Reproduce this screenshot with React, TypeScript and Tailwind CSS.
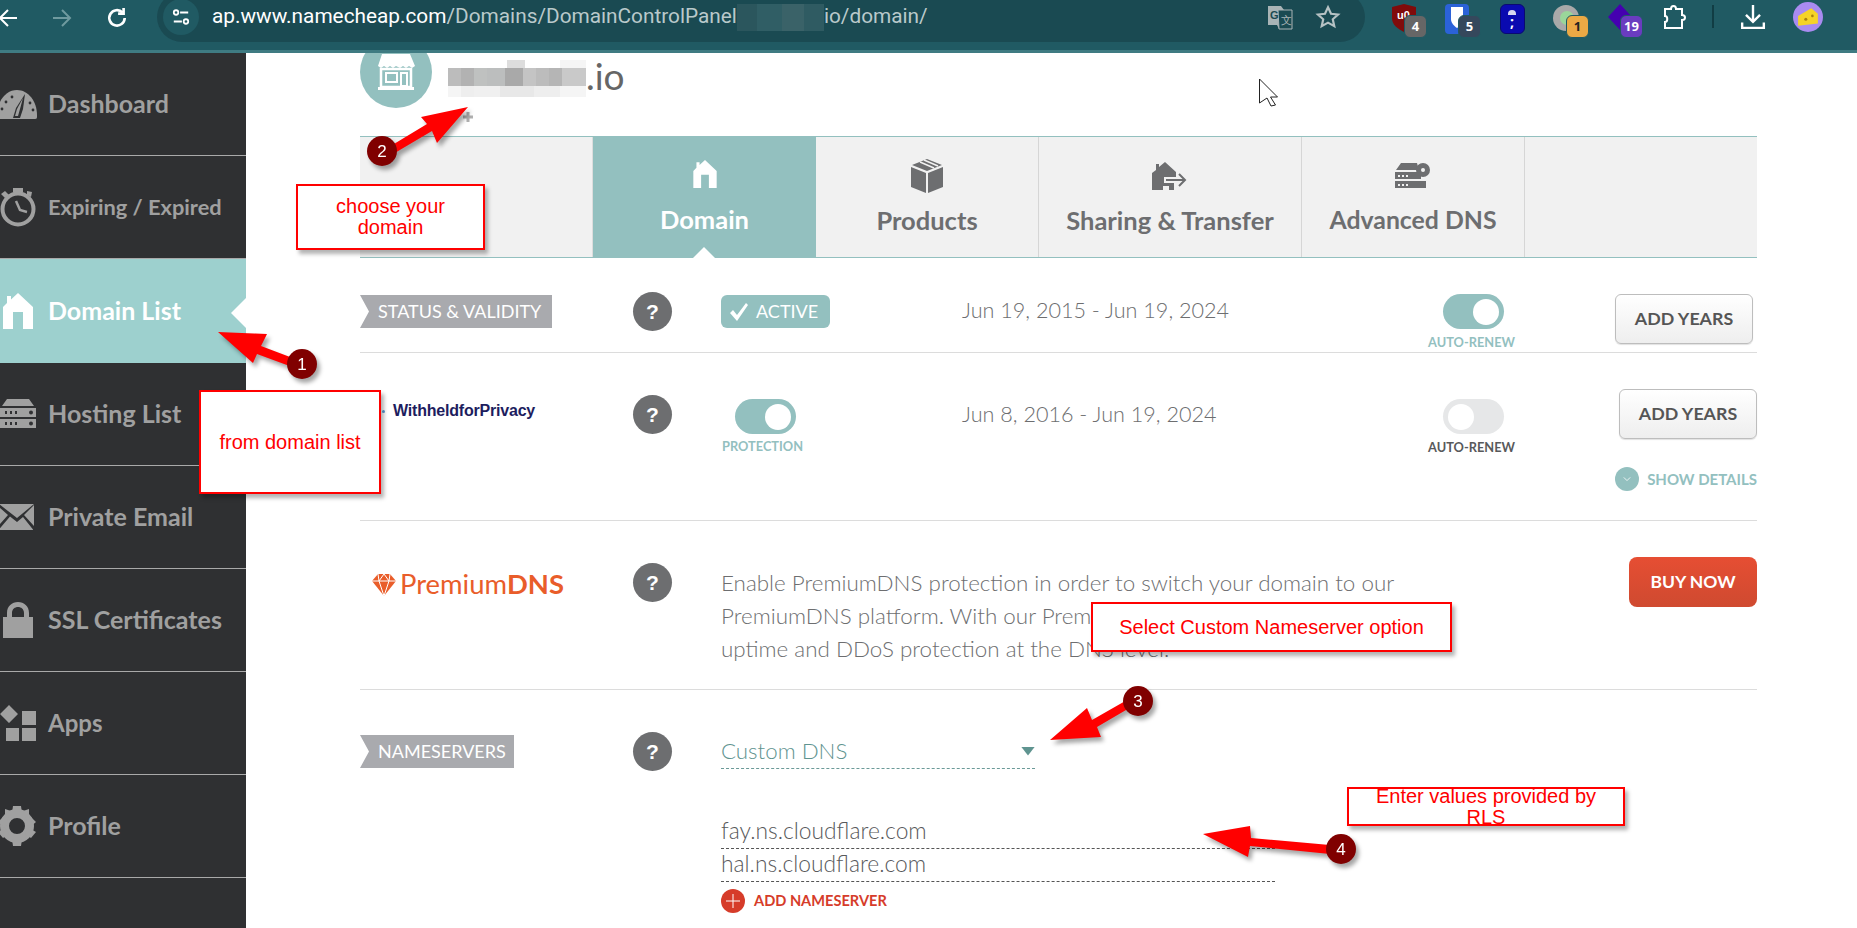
import React from 'react'

const lato = "font-['Lato','Open_Sans',sans-serif]"

// sidebar icons, all drawn in a 38x38 box
const GaugeIcon = () => (
  <svg viewBox="0 0 40 30" className="w-[40px] h-[30px] -ml-[3px] fill-[#a0a0a0]">
    <path d="M2 30c-2 0-2-1-2-4C0 12 9 1 20 1s20 11 20 25c0 3 0 4-2 4H2z" />
    <path d="M28 5l-9 14-3 10h7l3-9z" fill="#2f3032" />
    <path d="M26 9l-6 11-2 7 3 0 2-7z" />
    <circle cx="9" cy="13" r="1.4" fill="#2f3032" />
    <circle cx="5" cy="20" r="1.4" fill="#2f3032" />
    <circle cx="15" cy="8" r="1.4" fill="#2f3032" />
    <circle cx="33" cy="14" r="1.4" fill="#2f3032" />
    <circle cx="36" cy="21" r="1.4" fill="#2f3032" />
  </svg>
)

const WatchIcon = () => (
  <svg viewBox="0 0 38 40" className="w-[38px] h-[40px] -ml-[1px]">
    <circle cx="19" cy="22" r="15.5" fill="none" stroke="#a0a0a0" strokeWidth="4" />
    <path d="M14 1h10v4H14zM2 7l4-3 4 4-4 3zM28 4l5 1-1 5-4-2z" fill="#a0a0a0" />
    <path d="M17 14l4 9 7 2" fill="none" stroke="#a0a0a0" strokeWidth="2.5" />
  </svg>
)

const HomeIcon = ({ cls }: { cls: string }) => (
  <svg viewBox="0 0 30 36" className={cls}>
    <path d="M0 36V14L4 10V3h4v3.500L15 0l15 14v22H20V19H10v17z" />
  </svg>
)

const ServerIcon = () => (
  <svg viewBox="0 0 36 30" className="w-[36px] h-[30px] fill-[#a0a0a0]">
    <path d="M7 0h22l5 7H2zM0 9h36v9H0zM0 20h36v9H0z" />
    <path d="M5 12h2v3H5zM10 12h2v3h-2zM15 12h2v3h-2zM5 23h2v3H5zM10 23h2v3h-2zM15 23h2v3h-2z" fill="#2f3032" />
    <circle cx="31" cy="13.500" r="2" fill="#2f3032" />
    <circle cx="31" cy="24.500" r="2" fill="#2f3032" />
  </svg>
)

const MailIcon = () => (
  <svg viewBox="0 0 35 26" className="w-[35px] h-[26px] -ml-[1px] fill-[#a0a0a0]">
    <path d="M0 0h35L18 14zM0 3l9 8-9 10zM35 1v21l-10-11zM11 12.500l7 5.500 6-5 10 12.500v1H0v-1z" />
  </svg>
)

const LockIcon = () => (
  <svg viewBox="0 0 30 36" className="w-[30px] h-[36px] ml-[3px] fill-[#a0a0a0]">
    <path d="M0 15h4V11C4 4 9 0 15 0s11 4 11 11v4h4v21H0zM9 15h12V11c0-4-3-6-6-6s-6 2-6 6z" />
  </svg>
)

const AppsIcon = () => (
  <svg viewBox="0 0 36 36" className="w-[36px] h-[36px] fill-[#a0a0a0]">
    <path d="M9 0l9 9-9 9-9-9zM22 6h14v14H22zM6 23h13v13H6zM22 23h14v13H22z" />
  </svg>
)

const GearIcon = () => (
  <svg viewBox="0 0 38 40" className="w-[38px] h-[40px] -ml-[2px]">
    <circle cx="19" cy="20" r="12.500" fill="none" stroke="#a0a0a0" strokeWidth="9" />
    <path d="M15 0h8l1 7h-10zM15 40h8l1-7h-10zM0 16l5-5 6 4-4 7zM38 16l-5-5-6 4 4 7zM0 26l5 6 6-4-4-6zM38 26l-5 6-6-4 4-6zM7 3l6 2 1 5-7 3zM31 3l-6 2-1 5 7 3z" fill="#a0a0a0" />
  </svg>
)

const navItems = [
  { label: 'Dashboard', size: 'text-[25px]', icon: <GaugeIcon /> },
  { label: 'Expiring / Expired', size: 'text-[21.800px]', icon: <WatchIcon /> },
  { label: 'Domain List', size: 'text-[25px]', icon: <HomeIcon cls="w-[30px] h-[36px] ml-[3px] fill-white" />, active: true },
  { label: 'Hosting List', size: 'text-[25px]', icon: <ServerIcon /> },
  { label: 'Private Email', size: 'text-[25px]', icon: <MailIcon /> },
  { label: 'SSL Certificates', size: 'text-[25px]', icon: <LockIcon /> },
  { label: 'Apps', size: 'text-[24px]', icon: <AppsIcon /> },
  { label: 'Profile', size: 'text-[25px]', icon: <GearIcon /> },
]

const Sidebar = () => (
  <aside className="w-[246px] shrink-0 bg-[#2f3032]">
    {navItems.map((item) =>
      item.active ? (
        <div key={item.label} className="relative h-[104px] bg-[#9dd0ce] flex items-center text-white">
          <span className="w-[48px] shrink-0 flex items-center">{item.icon}</span>
          <span className={`${lato} font-bold ${item.size}`}>{item.label}</span>
          <span className="absolute right-0 top-[39px] w-[15px] h-[30px] bg-white [clip-path:polygon(100%_0,0_50%,100%_100%)]" />
        </div>
      ) : (
        <div key={item.label} className="h-[103px] border-b border-[#a9a9a9] flex items-center text-[#a0a0a0]">
          <span className="w-[48px] shrink-0 flex items-center">{item.icon}</span>
          <span className={`${lato} font-bold ${item.size}`}>{item.label}</span>
        </div>
      )
    )}
  </aside>
)

const ExtIcon = ({ badge, badgeCls, children }: { badge?: string; badgeCls?: string; children: React.ReactNode }) => (
  <div className="relative w-[54px] h-[40px] flex justify-center pt-[4px]">
    {children}
    {badge && (
      <span className={`absolute left-[27px] top-[15px] h-[23px] min-w-[23px] px-[2px] rounded-[6px] border border-[#205a63] flex items-center justify-center font-['Open_Sans',sans-serif] font-bold text-[13px] ${badgeCls}`}>
        {badge}
      </span>
    )}
  </div>
)

const TopBar = () => (
  <header className="h-[53px] shrink-0 bg-[#205a63] border-b-[3px] border-[#3f7b82] flex items-start overflow-hidden">
    <div className="w-[157px] shrink-0 flex items-center h-[36px]">
      <svg viewBox="0 0 20 20" className="w-[20px] h-[20px] -ml-[2px] fill-none stroke-white stroke-2"><path d="M19 10H2M10 2l-8 8 8 8" /></svg>
      <svg viewBox="0 0 20 20" className="w-[20px] h-[20px] ml-[34px] fill-none stroke-[#6f9a9f] stroke-2"><path d="M1 10h17M10 2l8 8-8 8" /></svg>
      <svg viewBox="0 0 20 20" className="w-[22px] h-[22px] ml-[34px] fill-none stroke-white stroke-[2.400]"><path d="M17 10a7 7 0 1 1-2-5" /><path d="M16 1v5h-5" /></svg>
    </div>
    <div className="w-[1208px] h-[50px] -mt-[8px] shrink-0 rounded-full bg-[#1a4a52] flex items-center pl-[6px] pr-[24px]">
      <span className="w-[36px] h-[36px] rounded-full bg-[#205a63] flex items-center justify-center">
        <svg viewBox="0 0 20 20" className="w-[18px] h-[18px] fill-none stroke-white stroke-2"><path d="M9 5h9M2 15h9" /><circle cx="4.500" cy="5" r="2.500" /><circle cx="15.500" cy="15" r="2.500" /></svg>
      </span>
      <div className="ml-[13px] flex items-center font-['Roboto',sans-serif] text-[20.800px] text-[#b9c9cb]">
        <span className="text-white">ap.www.namecheap.com</span>
        <span>/Domains/DomainControlPanel</span>
        <span className="w-[87px] h-[27px] bg-[#2f5b62] flex shrink-0">
          <span className="w-[20px] bg-[#2b565d]" />
          <span className="w-[25px] bg-[#305e65]" />
          <span className="w-[22px] bg-[#3a6268]" />
        </span>
        <span>io/domain/</span>
      </div>
      <div className="ml-auto flex items-center">
        <svg viewBox="0 0 26 26" className="w-[26px] h-[26px]">
          <path d="M1 2h13l3 4h8v19H12l-2-4H1z" fill="#a9b4b6" />
          <path d="M11 6h14v19H12z" fill="#1a4a52" stroke="#a9b4b6" />
          <text x="3" y="15" fontSize="11" fontWeight="700" fill="#1a4a52" fontFamily="Liberation Sans">G</text>
          <text x="14" y="20" fontSize="11" fill="#a9b4b6" fontFamily="Liberation Sans">文</text>
        </svg>
        <svg viewBox="0 0 24 24" className="w-[26px] h-[26px] ml-[22px] fill-none stroke-[#b6c2c4] stroke-2"><path d="M12 3l2.800 6 6.500.7-4.900 4.400 1.400 6.400L12 17.200 6.200 20.500l1.400-6.400-4.900-4.400 6.500-.7z" /></svg>
      </div>
    </div>
    <div className="ml-[12px] flex items-start">
      <ExtIcon badge="4" badgeCls="bg-[#666666] text-white">
        <svg viewBox="0 0 24 28" className="w-[24px] h-[28px]">
          <path d="M12 0l12 3v11c0 7-6 11-12 14C6 25 0 21 0 14V3z" fill="#800b0b" />
          <text x="5" y="15" fontSize="11" fontWeight="700" fill="white" fontFamily="Liberation Sans">u0</text>
        </svg>
      </ExtIcon>
      <ExtIcon badge="5" badgeCls="bg-[#35485c] text-white">
        <svg viewBox="0 0 26 30" className="w-[26px] h-[30px]"><rect width="24" height="30" rx="4" fill="#2b62d8" /><path d="M6 3h12v12c0 4-3 7-6 9-3-2-6-5-6-9z" fill="white" /></svg>
      </ExtIcon>
      <ExtIcon>
        <span className="w-[25px] h-[30px] rounded-[6px] bg-[#0a0ab0] border border-[#0a0a70] flex flex-col items-center justify-center text-white font-bold text-[14px] leading-[14px]">
          <span className="w-[8px] h-[5px] rounded-t-full bg-[#d8d8f0]" />;
        </span>
      </ExtIcon>
      <ExtIcon badge="1" badgeCls="bg-[#eba945] text-[#222222]">
        <svg viewBox="0 0 26 30" className="w-[26px] h-[30px]"><circle cx="13" cy="14" r="13" fill="#a9a9a9" /><circle cx="14" cy="14" r="7" fill="#9ad69a" /></svg>
      </ExtIcon>
      <ExtIcon badge="19" badgeCls="bg-[#6a3cc0] text-white">
        <svg viewBox="0 0 26 30" className="w-[26px] h-[30px]"><path d="M13 0l12 13-12 13L1 13z" fill="#4500b0" /></svg>
      </ExtIcon>
      <ExtIcon>
        <svg viewBox="0 0 24 28" className="w-[24px] h-[28px] fill-none stroke-white stroke-2"><path d="M3 5h6c0-4 5-4 5 0h6v6c4 0 4 5 0 5v8H3v-6c3 0 3-6 0-6z" /></svg>
      </ExtIcon>
    </div>
    <span className="ml-[11px] mt-[5px] w-[2px] h-[23px] bg-[#113d44]" />
    <svg viewBox="0 0 24 24" className="ml-[26px] mt-[4px] w-[26px] h-[26px] fill-none stroke-white stroke-[2.2]"><path d="M12 1v15M5.500 10l6.500 6.500 6.500-6.500M2 17v5h20v-5" /></svg>
    <div className="ml-[27px] mt-[2px] w-[30px] h-[30px] rounded-full bg-[#a98bf0] flex items-center justify-center">
      <svg viewBox="0 0 20 20" className="w-[22px] h-[22px]"><path d="M1 9l12-7 6 5v9L1 18z" fill="#f5d327" /><circle cx="8" cy="12" r="1.400" fill="#a8820f" /><circle cx="14" cy="9" r="1.200" fill="#a8820f" /></svg>
    </div>
  </header>
)

const Help = () => (
  <span className="w-[39px] h-[39px] shrink-0 rounded-full bg-[#6d6e70] flex items-center justify-center text-white font-['Liberation_Sans',sans-serif] font-bold text-[21px]">?</span>
)

const RowLabel = ({ children, cls }: { children: string; cls: string }) => (
  <span className={`h-[33px] flex items-center bg-[#a9aaae] pl-[18px] text-white font-['Lato',sans-serif] text-[18px] [clip-path:polygon(0_0,100%_0,100%_100%,0_100%,9px_50%)] ${cls}`}>
    {children}
  </span>
)

const Toggle = ({ on }: { on: boolean }) => (
  <span className={`w-[61px] h-[35px] rounded-full flex items-center px-[5px] ${on ? 'bg-[#93c0bf] justify-end' : 'bg-[#e6e7e8] justify-start'}`}>
    <span className="w-[26px] h-[26px] rounded-full bg-white" />
  </span>
)

const AddYears = () => (
  <button className="w-[138px] h-[50px] pb-[2px] rounded-[6px] border border-[#bdbdbd] bg-gradient-to-b from-[#ffffff] to-[#eeeeee] shadow-[0_1px_1px_rgba(0,0,0,0.12)] text-[#555555] font-['Lato',sans-serif] font-bold text-[17.800px]">
    ADD YEARS
  </button>
)

const DateText = ({ children }: { children: string }) => (
  <span className={`${lato} font-light text-[21.600px] leading-[33px] text-[#6d6e70]`}>{children}</span>
)

const tabs = [
  {
    label: 'Products',
    w: 'w-[223px]',
    size: 'text-[25.500px]',
    icon: (
      <svg viewBox="0 0 32 34" className="w-[32px] h-[34px] fill-[#6d6e70]">
        <path d="M16 0l15 6-15 6L1 6zM0 8l15 6v20L0 28zM32 8l-15 6v20l15-6z" />
        <path d="M13 1l14 6M9 3l14 6" stroke="#f1f1f1" strokeWidth="1.500" />
      </svg>
    ),
  },
  {
    label: 'Sharing & Transfer',
    w: 'w-[263px]',
    size: 'text-[25.500px]',
    icon: (
      <svg viewBox="0 0 36 28" className="w-[36px] h-[28px] fill-[#6d6e70]">
        <path d="M0 28V11l4-3V2h3v3l6-5 11 10v5H12v6h10v7h-5v-4h-6v4z" />
        <path d="M14 18h18M27 12l6 6-6 6" fill="none" stroke="#6d6e70" strokeWidth="2" />
      </svg>
    ),
  },
  {
    label: 'Advanced DNS',
    w: 'w-[223px]',
    size: 'text-[24.800px]',
    icon: (
      <svg viewBox="0 0 36 26" className="w-[36px] h-[26px] fill-[#6d6e70]">
        <path d="M6 0h16l2 7H1zM0 9h26v7H0zM0 18h31v7H0z" />
        <circle cx="28" cy="7" r="7" />
        <circle cx="28" cy="7" r="2" fill="#f1f1f1" />
        <path d="M3 12h2v2H3zM7 12h2v2H7zM11 12h2v2h-2zM3 21h2v2H3zM7 21h2v2H7zM11 21h2v2h-2z" fill="#f1f1f1" />
      </svg>
    ),
  },
]

const TabBar = () => (
  <div className={`h-[122px] shrink-0 flex bg-[#f1f1f1] border-y border-[#93c0bf] ${lato}`}>
    <div className="w-[233px] border-r border-[#dddddd]" />
    <div className="relative w-[223px] -my-px bg-[#93c0bf] flex flex-col items-center text-white">
      <HomeIcon cls="w-[24px] h-[28px] mt-[24px] fill-white" />
      <span className="mt-[17px] font-bold text-[25.500px] leading-[28px]">Domain</span>
      <span className="absolute bottom-0 left-[100px] w-[22px] h-[11px] bg-white [clip-path:polygon(50%_0,100%_100%,0_100%)]" />
    </div>
    {tabs.map((tab) => (
      <div key={tab.label} className={`${tab.w} border-r border-[#d6d6d6] flex flex-col items-center text-[#6d6e70]`}>
        <span className="h-[34px] mt-[22px] flex items-center">{tab.icon}</span>
        <span className={`mt-[13px] font-bold leading-[28px] ${tab.size}`}>{tab.label}</span>
      </div>
    ))}
  </div>
)

const StatusRow = () => (
  <div className="h-[95px] shrink-0 border-b border-[#dcdcdc] flex items-start pt-[37px]">
    <div className="w-[273px] shrink-0"><RowLabel cls="w-[192px]">STATUS &amp; VALIDITY</RowLabel></div>
    <div className="w-[88px] shrink-0 -mt-[3px]"><Help /></div>
    <span className="w-[241px] shrink-0">
      <span className="w-[109px] h-[33px] rounded-[6px] bg-[#93c0bf] flex items-center pl-[8px] text-white">
        <svg viewBox="0 0 20 20" className="w-[20px] h-[20px] fill-white"><path d="M1 11l3-3 4 5 9-12 2 2-11 16z" /></svg>
        <span className={`${lato} text-[18px] ml-[7px]`}>ACTIVE</span>
      </span>
    </span>
    <div className="w-[465px] shrink-0 -mt-[1px]"><DateText>Jun 19, 2015 - Jun 19, 2024</DateText></div>
    <div className="w-[89px] shrink-0 flex flex-col items-center -mt-[1px]">
      <span className="ml-[4px]"><Toggle on /></span>
      <span className={`${lato} font-bold text-[12.800px] leading-[16px] mt-[5px] text-[#93c0bf]`}>AUTO-RENEW</span>
    </div>
    <div className="ml-[99px] -mt-[1px]"><AddYears /></div>
  </div>
)

const PrivacyRow = () => (
  <div className="h-[168px] shrink-0 border-b border-[#dcdcdc] flex items-start">
    <div className="w-[273px] shrink-0 pl-[22px] pt-[46px] flex items-center">
      <span className="w-[3px] h-[3px] rounded-full bg-[#5b9bd5] mr-[8px]" />
      <span className="font-['Liberation_Sans',sans-serif] font-bold text-[16px] text-[#1d1d5e] tracking-[-0.2px]">WithheldforPrivacy</span>
    </div>
    <div className="w-[88px] shrink-0 pt-[42px]"><Help /></div>
    <div className="w-[241px] shrink-0 pl-[14px] pt-[46px] flex flex-col items-start">
      <Toggle on />
      <span className={`${lato} font-bold text-[12.800px] leading-[16px] mt-[4px] -ml-[13px] text-[#93c0bf]`}>PROTECTION</span>
    </div>
    <div className="w-[465px] shrink-0 pt-[45px]"><DateText>Jun 8, 2016 - Jun 19, 2024</DateText></div>
    <div className="w-[89px] shrink-0 flex flex-col items-center pt-[46px]">
      <span className="ml-[4px]"><Toggle on={false} /></span>
      <span className={`${lato} font-bold text-[12.800px] leading-[16px] mt-[5px] text-[#58595b]`}>AUTO-RENEW</span>
    </div>
    <div className="ml-[103px] pt-[36px] w-[138px]">
      <AddYears />
      <div className="mt-[28px] flex justify-end items-center whitespace-nowrap">
        <span className="w-[24px] h-[24px] shrink-0 rounded-full bg-[#93c0bf] flex items-center justify-center">
          <svg viewBox="0 0 10 10" className="w-[8px] h-[8px] fill-none stroke-white"><path d="M1 3l4 4 4-4" /></svg>
        </span>
        <span className={`${lato} ml-[8px] shrink-0 font-bold text-[15px] leading-[18px] text-[#93c0bf]`}>SHOW DETAILS</span>
      </div>
    </div>
  </div>
)

const PremiumRow = () => (
  <div className="h-[169px] shrink-0 border-b border-[#dcdcdc] flex items-start">
    <div className="w-[273px] shrink-0 pl-[12px] pt-[47px] flex items-center">
      <svg viewBox="0 0 24 24" className="w-[24px] h-[24px]">
        <path d="M6 2h12l6 7-12 15L0 9z" fill="#e95d2a" />
        <path d="M0 9h24M7 9l5 15 5-15M6 2l1 7 5-7 5 7 1-7" fill="none" stroke="white" strokeWidth="1" />
      </svg>
      <span className={`${lato} ml-[4px] text-[27.400px] leading-[32px] text-[#e95d2a]`}>Premium<b>DNS</b></span>
    </div>
    <div className="w-[88px] shrink-0 pt-[42px]"><Help /></div>
    <p className={`w-[780px] shrink-0 pt-[45px] ${lato} font-light text-[22.400px] leading-[33px] text-[#6d6e70]`}>
      Enable PremiumDNS protection in order to switch your domain to our<br />
      PremiumDNS platform. With our PremiumDNS you get 100%<br />
      uptime and DDoS protection at the DNS level.
    </p>
    <button className={`ml-[128px] mt-[36px] w-[128px] h-[50px] shrink-0 rounded-[8px] bg-gradient-to-b from-[#e64e33] to-[#cf4a30] text-white ${lato} font-bold text-[17.500px]`}>
      BUY NOW
    </button>
  </div>
)

const NameserverRow = () => (
  <div className="flex-1 flex items-start">
    <div className="w-[273px] shrink-0 pt-[45px]"><RowLabel cls="w-[154px]">NAMESERVERS</RowLabel></div>
    <div className="w-[88px] shrink-0 pt-[42px]"><Help /></div>
    <div className="pt-[44px]">
      <div className="w-[314px] h-[35px] border-b border-dashed border-[#6b9a98] flex items-center justify-between">
        <span className={`${lato} font-light text-[22.300px] text-[#5f9490]`}>Custom DNS</span>
        <span className="w-[14px] h-[9px] bg-[#5f9490] [clip-path:polygon(0_0,100%_0,50%_100%)]" />
      </div>
      <div className={`mt-[47px] w-[554px] h-[33px] border-b border-dashed border-[#555555] ${lato} font-light text-[22.800px] leading-[29px] text-[#58595b]`}>fay.ns.cloudflare.com</div>
      <div className={`w-[554px] h-[33px] border-b border-dashed border-[#555555] ${lato} font-light text-[22.800px] leading-[29px] text-[#58595b]`}>hal.ns.cloudflare.com</div>
      <div className="mt-[7px] flex items-center">
        <span className="w-[24px] h-[24px] rounded-full bg-[#d63c2a] flex items-center justify-center">
          <svg viewBox="0 0 16 16" className="w-[16px] h-[16px] stroke-white"><path d="M8 1v14M1 8h14" /></svg>
        </span>
        <span className={`${lato} ml-[9px] font-bold text-[14.600px] text-[#d63c2a]`}>ADD NAMESERVER</span>
      </div>
    </div>
  </div>
)

const Callout = ({ cls, children }: { cls: string; children: React.ReactNode }) => (
  <div className={`absolute border-[2px] border-[#ff0000] bg-white shadow-[3px_4px_4px_rgba(0,0,0,0.3)] flex items-center justify-center text-center text-[#ff0000] font-['Liberation_Sans',sans-serif] text-[20px] leading-[21px] ${cls}`}>
    {children}
  </div>
)

const Step = ({ x, y, n }: { x: number; y: number; n: string }) => (
  <g>
    <circle cx={x} cy={y} r="15" fill="#800000" />
    <text x={x} y={y + 6} textAnchor="middle" fontSize="17" fill="white" fontFamily="Liberation Sans">{n}</text>
  </g>
)

const Arrows = () => (
  <svg viewBox="0 0 1857 928" className="absolute left-0 top-0 w-[1857px] h-[928px] pointer-events-none">
    <path d="M468 112v10M463 117h10" stroke="#b0b0b0" strokeWidth="3" />
    <path d="M1259.500 79v24l7.500-5 4 8 4.500-1-5-8h7z" fill="white" stroke="#222222" />
    <g className="drop-shadow-[3px_4px_2px_rgba(0,0,0,0.35)]">
      <path d="M218 332l49 2-6 12 37 14-3 8-38-14-4 9z" fill="#ff0000" />
      <Step x={302} y={364} n="1" />
      <path d="M468 107l-31 36-5-12-44 26-4-7 43-26-6-7z" fill="#ff0000" />
      <Step x={382} y={151} n="2" />
      <path d="M1050 740l37-32 5 12 42-24 4 7-41 24 4 10z" fill="#ff0000" />
      <Step x={1138} y={701} n="3" />
      <path d="M1203 834l47-8 1 12 90 8-1 9-90-9-2 11z" fill="#ff0000" />
      <Step x={1341} y={849} n="4" />
    </g>
  </svg>
)

export default function App() {
  return (
    <div className="relative w-[1857px] h-[928px] overflow-hidden bg-white flex flex-col">
      <TopBar />
      <div className="flex-1 min-h-0 flex">
        <Sidebar />
        <main className="flex-1 min-w-0 pl-[114px] pr-[100px] flex flex-col overflow-hidden">
          <div className="h-[83px] shrink-0 flex items-start">
            <span className="w-[72px] h-[72px] -mt-[17px] shrink-0 rounded-full bg-[#93c0bf] flex items-center justify-center">
              <svg viewBox="0 0 38 36" className="w-[38px] h-[36px] -mt-[1px]">
                <path d="M5 0h28l5 12-3 2-3-2-3 2-3-2-3 2-4-2-3 2-3-2-3 2-3-2-3 2-3-2z" fill="#ffffff" />
                <path d="M4 15h30v18H4z" fill="none" stroke="#ffffff" strokeWidth="2.500" />
                <path d="M9 19h11v9H9zM24 19h6v13h-6z" fill="none" stroke="#ffffff" strokeWidth="2" />
                <path d="M1 33h36v3H1z" fill="#ffffff" />
              </svg>
            </span>
            <div className="ml-[16px] mt-[7px] w-[138px] h-[37px] flex flex-col shrink-0">
              <div className="h-[8px] flex">
                <span className="ml-[59px] w-[18px] bg-[#dddddd]" />
                <span className="ml-[35px] w-[26px] bg-[#f5f5f5]" />
              </div>
              <div className="h-[18px] flex">
                <span className="w-[13px] bg-[#bcbcbc]" />
                <span className="w-[13px] bg-[#b2b2b2]" />
                <span className="w-[13px] bg-[#bfc1c0]" />
                <span className="w-[18px] bg-[#bcbebe]" />
                <span className="w-[18px] bg-[#a9a9a9]" />
                <span className="w-[13px] bg-[#c4c4c4]" />
                <span className="w-[13px] bg-[#bcbcbc]" />
                <span className="w-[13px] bg-[#b5b5b5]" />
                <span className="w-[24px] bg-[#c9c9c9]" />
              </div>
              <div className="h-[11px] flex">
                <span className="w-[13px] bg-[#f5f5f5]" />
                <span className="w-[13px] bg-[#eeeeee]" />
                <span className="w-[26px] bg-[#f0f0f0]" />
                <span className="w-[34px] bg-[#e8e8e8]" />
                <span className="w-[26px] bg-[#eeeeee]" />
                <span className="w-[26px] bg-[#f5f5f5]" />
              </div>
            </div>
            <span className={`${lato} text-[37px] leading-[40px] mt-[3px] text-[#666666]`}>.io</span>
          </div>
          <TabBar />
          <StatusRow />
          <PrivacyRow />
          <PremiumRow />
          <NameserverRow />
        </main>
      </div>
      <Callout cls="left-[296px] top-[184px] w-[189px] h-[66px]">choose your<br />domain</Callout>
      <Callout cls="left-[199px] top-[390px] w-[182px] h-[104px]">from domain list</Callout>
      <Callout cls="left-[1091px] top-[602px] w-[361px] h-[50px]">Select Custom Nameserver option</Callout>
      <Callout cls="left-[1347px] top-[787px] w-[278px] h-[39px]">
        <span className="-my-[6px]">Enter values provided by<br />RLS</span>
      </Callout>
      <Arrows />
    </div>
  )
}
